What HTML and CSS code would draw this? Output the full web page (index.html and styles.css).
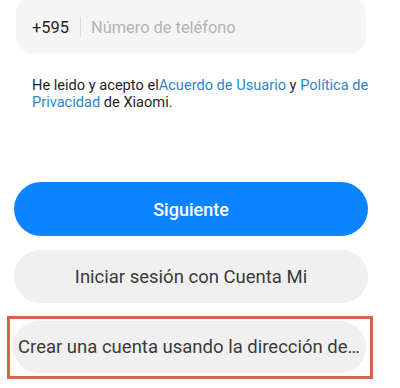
FILE: index.html
```html
<!DOCTYPE html>
<html lang="es">
<head>
<meta charset="utf-8">
<link rel="stylesheet" href="styles.css">
</head>
<body>
<main class="page">
  <div class="phone">
    <span class="code">+595</span>
    <span class="divider"></span>
    <span class="placeholder">Número de teléfono</span>
  </div>
  <p class="terms">He leido y acepto el<a class="link">Acuerdo de Usuario</a> y <a class="link">Política de Privacidad</a> de Xiaomi.</p>
  <button class="btn btn-primary">Siguiente</button>
  <button class="btn btn-secondary">Iniciar sesión con Cuenta Mi</button>
  <div class="highlight">
    <button class="btn btn-create">Crear una cuenta usando la dirección de correo electrónico</button>
  </div>
</main>
</body>
</html>
```
FILE: styles.css
```css
* { box-sizing: border-box; }
html, body { margin: 0; padding: 0; background: #fff; }
body { width: 400px; height: 388px; overflow: hidden; font-family: Roboto, "Noto Sans", sans-serif; }
.page { display: flex; flex-direction: column; }
.phone {
  margin: -4px 34px 0 16px;
  height: 58px;
  background: #f5f5f5;
  border-radius: 18px;
  display: flex;
  align-items: center;
  padding: 4px 0 0 16px;
}
.code { font-size: 16.4px; color: #1f1f1f; }
.divider { width: 1px; height: 20px; background: #dcdcdc; margin: 0 10px 0 11px; }
.placeholder { font-size: 16.4px; color: #b3b3b3; }
.terms {
  margin: 23px 26px 0 32px;
  font-size: 14.6px;
  line-height: 17px;
  color: #1f1f1f;
}
.link { color: #2a86d1; }
.btn {
  border: none;
  font-family: inherit;
  border-radius: 27px;
  display: block;
}
.btn-primary {
  margin: 71px 0 0 14px;
  width: 354px;
  height: 54px;
  background: #0d84ff;
  color: #fff;
  font-size: 18px;
  font-weight: 500;
}
.btn-secondary {
  margin: 14px 0 0 14px;
  width: 354px;
  height: 53px;
  background: #f0f0f0;
  color: #3a3a3a;
  font-size: 18.5px;
}
.highlight {
  margin: 13px 0 0 7px;
  width: 366px;
  height: 63px;
  border: 3px solid #d4674a;
  padding: 2px 4px 1px 3px;
}
.btn-create {
  width: 100%;
  height: 52px;
  background: #f0f0f0;
  color: #3a3a3a;
  font-size: 18.5px;
  padding: 0 3px 0 5px;
  text-align: left;
  white-space: nowrap;
  overflow: hidden;
  text-overflow: ellipsis;
}
```
